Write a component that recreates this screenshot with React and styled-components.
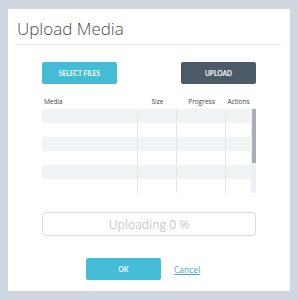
import React from 'react';
import styled, { createGlobalStyle } from 'styled-components';

const GlobalStyle = createGlobalStyle`
	html, body {
		margin: 0;
		padding: 0;
		background: #cfd8e0;
	}
	body {
		font-family: 'Open Sans', 'Liberation Sans', sans-serif;
	}
`;

const rows = [0, 1, 2, 3, 4, 5];

export default function App() {
	return (
		<>
			<GlobalStyle />
			<Page>
				<Dialog>
					<Header>
						<Title>Upload Media</Title>
					</Header>
					<Body>
						<ButtonRow>
							<Button $variant='primary'>Select Files</Button>
							<Button $variant='dark'>Upload</Button>
						</ButtonRow>
						<Table>
							<HeadRow>
								<HeadCell $align='left'>Media</HeadCell>
								<HeadCell>Size</HeadCell>
								<HeadCell>Progress</HeadCell>
								<HeadCell>Actions</HeadCell>
								<span />
							</HeadRow>
							<Scroller>
								<Rows>
									{rows.map(i => (
										<Row key={i} $striped={i % 2 === 0}>
											<Cell />
											<Cell />
											<Cell />
											<Cell />
										</Row>
									))}
								</Rows>
								<ScrollTrack>
									<ScrollThumb />
								</ScrollTrack>
							</Scroller>
						</Table>
						<Progress>Uploading 0 %</Progress>
						<Footer>
							<Button $variant='primary'>OK</Button>
							<CancelLink href='#'>Cancel</CancelLink>
						</Footer>
					</Body>
				</Dialog>
			</Page>
		</>
	);
}

const Page = styled.div`
	width: 298px;
	height: 300px;
	padding: 9px 8px;
	box-sizing: border-box;
`;

const Dialog = styled.div`
	width: 282px;
	height: 282px;
	background: #ffffff;
	display: flex;
	flex-direction: column;
`;

const Header = styled.div`
	margin: 0 9px 0 8px;
	padding: 9px 0 4px 1px;
	border-bottom: 1px solid #e6e9ec;
`;

const Title = styled.h1`
	margin: 0;
	font-family: 'Open Sans', sans-serif;
	font-weight: 300;
	font-size: 17px;
	line-height: 22px;
	color: #4a4a4a;
`;

const Body = styled.div`
	padding: 17px 34px 0 34px;
	display: flex;
	flex-direction: column;
`;

const ButtonRow = styled.div`
	display: flex;
	justify-content: space-between;
`;

const Button = styled.button`
	width: 75px;
	height: 22px;
	border: none;
	border-radius: 2px;
	padding: 0;
	font-family: 'Lato', sans-serif;
	font-weight: 700;
	font-size: 6.5px;
	letter-spacing: 0.1px;
	text-transform: uppercase;
	color: #ffffff;
	background: ${p => (p.$variant === 'dark' ? '#4b5968' : '#45bcd6')};
`;

const Table = styled.div`
	margin-top: 10px;
	display: flex;
	flex-direction: column;
`;

const HeadRow = styled.div`
	display: grid;
	grid-template-columns: 96px 39px 49px 25px 5px;
	height: 15px;
	align-items: center;
`;

const HeadCell = styled.div`
	font-family: 'Open Sans', sans-serif;
	font-size: 6.5px;
	color: #444;
	text-align: ${p => p.$align || 'center'};
	padding-left: ${p => (p.$align === 'left' ? '2px' : '0')};
	white-space: nowrap;
`;

const Scroller = styled.div`
	display: flex;
	height: 84px;
	overflow: hidden;
`;

const Rows = styled.div`
	flex: 1;
	display: flex;
	flex-direction: column;
`;

const Row = styled.div`
	display: grid;
	grid-template-columns: 96px 39px 49px 25px;
	height: 14px;
	flex-shrink: 0;
	background: ${p => (p.$striped ? '#f2f3f5' : '#ffffff')};
`;

const Cell = styled.div`
	border-right: 1px solid #e4e7ea;
	&:last-child {
		border-right: none;
	}
`;

const ScrollTrack = styled.div`
	width: 5px;
	background: #eef1f3;
	display: flex;
	flex-direction: column;
	align-items: center;
`;

const ScrollThumb = styled.div`
	width: 4px;
	height: 54px;
	background: #a8b0b7;
`;

const Progress = styled.div`
	margin-top: 19px;
	height: 24px;
	border: 1px solid #dcdcdc;
	border-radius: 4px;
	box-sizing: border-box;
	display: flex;
	align-items: center;
	justify-content: center;
	font-family: 'Open Sans', sans-serif;
	font-size: 12px;
	color: #c9c9c9;
`;

const Footer = styled.div`
	margin-top: 22px;
	padding-left: 44px;
	display: flex;
	align-items: center;
	gap: 13px;
`;

const CancelLink = styled.a`
	font-family: 'Open Sans', sans-serif;
	font-size: 8.5px;
	color: #4ea6c8;
	text-decoration: underline;
`;
